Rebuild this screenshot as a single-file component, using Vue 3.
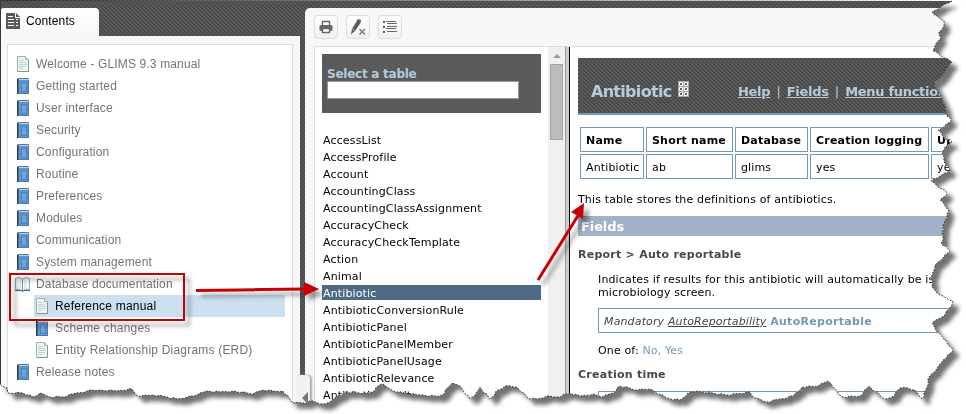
<script setup>
const chapters = [
  { label: 'Welcome - GLIMS 9.3 manual', icon: 'page' },
  { label: 'Getting started', icon: 'book' },
  { label: 'User interface', icon: 'book' },
  { label: 'Security', icon: 'book' },
  { label: 'Configuration', icon: 'book' },
  { label: 'Routine', icon: 'book' },
  { label: 'Preferences', icon: 'book' },
  { label: 'Modules', icon: 'book' },
  { label: 'Communication', icon: 'book' },
  { label: 'System management', icon: 'book' },
  { label: 'Database documentation', icon: 'open' },
  { label: 'Reference manual', icon: 'page', child: true, active: true },
  { label: 'Scheme changes', icon: 'book', child: true },
  { label: 'Entity Relationship Diagrams (ERD)', icon: 'page', child: true },
  { label: 'Release notes', icon: 'book' },
]
const tables = [
  'AccessList', 'AccessProfile', 'Account', 'AccountingClass', 'AccountingClassAssignment',
  'AccuracyCheck', 'AccuracyCheckTemplate', 'Action', 'Animal', 'Antibiotic',
  'AntibioticConversionRule', 'AntibioticPanel', 'AntibioticPanelMember',
  'AntibioticPanelUsage', 'AntibioticRelevance', 'AntibioticResult',
]

// Torn-paper outline, clockwise from the top right corner.
const edge = [
  [952, 1], [942, 6], [932, 12], [937, 16], [944, 21], [944, 26], [939, 32], [941, 38], [935, 46], [933, 51],
  [941, 56], [952, 62], [946, 70], [941, 77], [934, 82], [937, 89], [940, 95], [944, 104], [946, 113], [951, 121],
  [944, 127], [938, 130], [943, 137], [952, 142], [945, 147], [942, 153], [944, 161], [950, 171], [940, 176], [931, 181],
  [937, 186], [945, 190], [947, 194], [940, 200], [949, 211], [945, 220], [942, 232], [943, 240], [941, 243],
  [950, 251], [943, 258], [935, 265], [932, 275], [932, 287], [940, 295], [953, 301], [949, 309], [942, 317],
  [932, 323], [937, 332], [947, 342], [953, 351], [943, 360], [937, 368], [929, 377], [927, 387], [922, 399],
  [915, 390], [908, 388], [900, 388], [892, 397], [885, 399], [880, 395], [869, 386], [860, 396], [843, 397],
  [833, 387], [828, 381], [818, 386], [802, 387], [793, 396], [780, 399], [767, 402], [755, 398], [750, 392],
  [727, 395], [697, 391], [688, 393], [680, 400], [667, 398], [650, 389], [638, 390], [620, 386], [613, 393],
  [602, 397], [593, 394], [580, 396], [570, 393], [557, 397], [547, 396], [537, 399], [528, 398], [517, 387],
  [505, 386], [498, 390], [490, 399], [480, 387], [475, 395], [469, 398], [460, 386], [452, 383], [442, 395],
  [435, 396], [420, 395], [410, 394], [397, 392], [387, 387], [381, 384], [372, 392], [365, 393], [347, 392],
  [338, 396], [330, 402], [323, 404], [313, 401], [303, 403], [293, 403], [283, 391], [273, 391], [263, 390],
  [253, 394], [233, 391], [220, 392], [207, 391], [197, 395], [187, 397], [177, 399], [167, 397], [153, 395],
  [138, 396], [132, 389], [117, 391], [100, 390], [87, 391], [73, 394], [63, 397], [50, 397], [40, 393],
  [33, 397], [23, 393], [8, 393], [7, 388], [0, 384],
]
const torn = []
edge.forEach((p, i) => {
  torn.push(p)
  const q = edge[i + 1]
  if (!q) return
  const len = Math.hypot(q[0] - p[0], q[1] - p[1])
  const n = Math.floor(len / 3)
  for (let k = 1; k < n; k++) {
    const t = k / n
    const j = ((i * 7 + k * 5) % 4) * 0.5 - 0.75
    torn.push([
      +(p[0] + (q[0] - p[0]) * t + (-(q[1] - p[1]) / len) * j).toFixed(1),
      +(p[1] + (q[1] - p[1]) * t + ((q[0] - p[0]) / len) * j).toFixed(1),
    ])
  }
})
const outline = torn.map((p) => p.join(',')).join(' ')
const clip = 'polygon(0px 0px, ' + torn.map((p) => p[0] + 'px ' + p[1] + 'px').join(', ') + ')'
</script>

<template>
  <div class="scene">
    <div class="paper">
      <div class="app" :style="{ clipPath: clip }">
        <aside class="side">
          <div class="tab">
            <svg width="14" height="16" viewBox="0 0 14 16">
              <path d="M0 0H9V3H13L14 5V16H0Z" fill="#5b5b5b" />
              <path d="M10 0L14 4H10Z" fill="#5b5b5b" />
              <path d="M9.500 0V4.500H14" fill="none" stroke="#fff" />
              <path d="M2 3.500H7M2 6.500H8M2 9.500H8M2 12.500H8M10 6.500H12M10 9.500H12M10 12.500H12" stroke="#fff" />
            </svg>
            <span>Contents</span>
          </div>
          <div class="side-body">
            <nav class="tree">
              <div v-for="c in chapters" :key="c.label" class="node" :class="{ child: c.child, active: c.active }">
                <svg v-if="c.icon === 'page'" class="ico" width="12" height="16" viewBox="0 0 12 16">
                  <path d="M.5 .5H8.5L11.5 3.5V15.5H.5Z" fill="#eef4f2" stroke="#a3b3af" />
                  <path d="M8.5 .5V3.5H11.5" fill="#d5e3df" stroke="#a3b3af" />
                  <path d="M11.500 4V15.500H1" fill="none" stroke="#84968f" />
                  <path d="M2 4.5H7M2 6.5H9M2 8.5H10M2 10.5H9M2 12.5H6" stroke="#bfd3cf" />
                </svg>
                <svg v-else-if="c.icon === 'book'" class="ico" width="12" height="16" viewBox="0 0 12 16">
                  <path d="M0 1L1 0H12V16H0Z" fill="#5f96d0" />
                  <path d="M0 1H1.500V16H0Z" fill="#353b42" />
                  <path d="M1 .5H12" stroke="#5c7a98" />
                  <path d="M2 1.5H12" stroke="#b4cfe9" />
                  <path d="M11.5 2V16M2 15.5H12" stroke="#4a79b0" />
                  <path d="M4.5 4.5H9.5V13.5H4.5Z" fill="#6ca4db" stroke="#4a80bd" />
                </svg>
                <svg v-else class="ico open" width="16" height="16" viewBox="0 0 16 16">
                  <path d="M.5 2.5Q4 0 7.5 3Q11 0 14.5 2.5V13.5Q11 12 7.5 15Q4 12 .5 13.5Z" fill="#f2f6f7" stroke="#9aa8af" />
                  <path d="M7.5 3V15" stroke="#7e939e" />
                  <path d="M5.5 3V12M10 3V12" stroke="#d3dfe3" />
                  <path d="M0 14.5H6L7.5 15.5L9 14.5H15" fill="none" stroke="#44657b" />
                </svg>
                <span>{{ c.label }}</span>
              </div>
            </nav>
          </div>
          <div class="collapse">
            <svg width="6" height="12" viewBox="0 0 6 12"><path d="M6 0V12L0 6Z" fill="#777" /></svg>
          </div>
        </aside>

        <main class="main">
          <div class="toolbar">
            <button class="tool">
              <svg width="14" height="14" viewBox="0 0 14 14">
                <path d="M3.5 5V1.5H10.5V5" fill="none" stroke="#666" stroke-width="1.4" />
                <rect x=".5" y="5" width="13" height="6" rx="1.5" fill="#666" />
                <path d="M3.5 8.5H10.5V12.5H3.5Z" fill="#fff" stroke="#666" stroke-width="1.3" />
              </svg>
            </button>
            <button class="tool">
              <svg width="16" height="16" viewBox="0 0 16 16">
                <path d="M8 0L11 1L10.500 4L5 12L1 15.500L2 10Z" fill="#5b5b5b" />
                <path d="M2.500 10L4.500 11.500" stroke="#fff" stroke-width=".7" />
                <path d="M9.500 10L15 15.500M15 10L9.500 15.500" stroke="#777" stroke-width="1.400" />
              </svg>
            </button>
            <button class="tool">
              <svg width="14" height="14" viewBox="0 0 14 14">
                <path d="M0 2H2M0 7H2M0 12H2" stroke="#5b5b5b" stroke-width="2" />
                <path d="M3 1.500H13M4 3.500H14M4 6.500H14M3 8.500H13M4 11.500H14" stroke="#6a6a6a" stroke-width="1" />
              </svg>
            </button>
          </div>
          <div class="frames">
            <section class="index">
              <div class="index-body">
                <div class="search">
                  <label for="q">Select a table</label>
                  <input id="q" type="text" />
                </div>
                <ul class="tables">
                  <li v-for="t in tables" :key="t" :class="{ current: t === 'Antibiotic' }">{{ t }}</li>
                </ul>
              </div>
              <div class="scroll">
                <svg width="8" height="4" viewBox="0 0 8 4"><path d="M0 4L4 0L8 4Z" fill="#999" /></svg>
                <div class="thumb"></div>
              </div>
            </section>
            <div class="splitter"></div>
            <article class="doc">
              <header class="doc-head">
                <h1>Antibiotic</h1>
                <svg class="grid" width="11" height="16" viewBox="0 0 11 16">
                  <path d="M0 0H11V16H0Z" fill="#aaa" />
                  <path d="M1.500 1.500H4.500V4.500H1.500ZM6.500 1.500H9.500V4.500H6.500ZM1.500 6.500H4.500V9.500H1.500ZM6.500 6.500H9.500V9.500H6.500ZM1.500 11.500H4.500V14.500H1.500ZM6.500 11.500H9.500V14.500H6.500Z" fill="#666" stroke="#fff" />
                </svg>
                <div class="links"><u>Help</u><span>|</span><u>Fields</u><span>|</span><u>Menu functions</u></div>
              </header>
              <div class="facts">
                <b>Name</b><b>Short name</b><b>Database</b><b>Creation logging</b><b>Update logging</b>
                <span>Antibiotic</span><span>ab</span><span>glims</span><span>yes</span><span>yes</span>
              </div>
              <p class="intro">This table stores the definitions of antibiotics.</p>
              <h2>Fields</h2>
              <h3>Report &gt; Auto reportable</h3>
              <p class="desc">Indicates if results for this antibiotic will automatically be issued<br />microbiology screen.</p>
              <div class="sig"><i>Mandatory <u>AutoReportability</u></i> <b>AutoReportable</b></div>
              <p class="oneof">One of: <span>No, Yes</span></p>
              <h3 class="second">Creation time</h3>
              <div class="sig next"></div>
            </article>
          </div>
        </main>
      </div>
    </div>

    <svg class="marks" width="966" height="414" viewBox="0 0 966 414">
      <polyline :points="outline" fill="none" stroke="#222" stroke-width=".9" stroke-dasharray="1.5 1.7" />
      <g class="red">
        <rect x="10" y="274" width="174" height="46" fill="none" stroke="#c60005" stroke-width="2" />
        <path d="M196 290.500L305 289" stroke="#c60005" stroke-width="3" />
        <path d="M304 282L319 289L304 296Z" fill="#c60005" />
        <path d="M538 280L579 214" stroke="#c60005" stroke-width="3" />
        <path d="M584 203L583 219L571 212Z" fill="#c60005" />
      </g>
    </svg>
  </div>
</template>

<style>
body { background: #fff; overflow: hidden; }
</style>

<style scoped>
* { box-sizing: border-box; }
.scene { position: relative; width: 966px; height: 414px; overflow: hidden; background: #fff; font-family: Verdana, "DejaVu Sans", sans-serif; font-size: 11px; letter-spacing: .14px; color: #000; }
.paper { filter: drop-shadow(6px 6px 2px rgba(0, 0, 0, .55)); }
.app, .doc-head {
  background: linear-gradient(45deg, #484848 25%, #5c5c5c 25% 50%, #484848 50% 75%, #5c5c5c 75%) 0 0 / 4px 4px;
}
.app { display: flex; height: 414px; width: 966px; padding-top: 7px; border-top: 1px solid #383838; border-left: 1px solid #383838; }
.side { position: relative; width: 299px; flex: none; display: flex; flex-direction: column; font-family: Arial, "Liberation Sans", sans-serif; }
.tab { width: 98px; height: 28px; display: flex; align-items: center; gap: 6px; padding: 0 0 2px 5px; border-radius: 2px 4px 0 0; background: linear-gradient(#fff, #f7f7f7); font-size: 12px; letter-spacing: .12px; }
.side-body { flex: 1; background: #f7f7f7; padding: 8px 7px 0 6px; display: flex; }
.tree { flex: 1; background: #fff; border: 1px solid #ddd; padding: 8px 7px 0 9px; }
.node { height: 22px; display: flex; align-items: center; gap: 7px; font-size: 12px; line-height: 14px; color: #747474; white-space: nowrap; letter-spacing: .15px; }
.node span { padding-bottom: 1px; }
.node .open { margin: 0 -2px; }
.node.child { margin-left: 17px; padding-left: 2px; letter-spacing: .2px; }
.node.active { background: #cbdfef; color: #000; }
.collapse { position: absolute; left: 296px; top: 367px; width: 14px; height: 45px; padding: 17px 0 0 5px; background: #f1f1f1; border-radius: 0 4px 0 0; border-right: 1px solid #aaa; box-shadow: 1px 0 2px #aaa; z-index: 2; }
.collapse svg { display: block; }
.main { flex: 1; margin-left: 5px; background: #f7f7f7; border-radius: 5px 0 0 0; display: flex; flex-direction: column; min-width: 0; }
.toolbar { height: 38px; padding: 7px 0 0 9px; display: flex; gap: 8px; }
.tool { width: 24px; height: 24px; padding: 0; border: 1px solid #ddd; border-radius: 4px; background: linear-gradient(#fff, #f0f0f0); display: flex; align-items: center; justify-content: center; }
.frames { flex: 1; margin-left: 9px; border: solid #ddd; border-width: 1px 0 0 1px; background: #fff; display: flex; min-height: 0; }
.index { width: 250px; flex: none; display: flex; }
.index-body { width: 233px; padding: 7px 7px 0; }
.search { height: 59px; background: #5a5a5a; padding: 14px 5px 0; display: flex; flex-direction: column; color: #b5cbdc; font-weight: bold; font-size: 12px; line-height: 13px; letter-spacing: -.25px; }
.search input { width: 192px; height: 18px; border: 1px solid #999; background: #fff; padding: 0; outline: none; }
.tables { list-style: none; margin: 19px 0 0; padding: 0; display: flex; flex-direction: column; gap: 2px; }
.tables li { height: 15px; line-height: 17px; padding-left: 1px; }
.tables .current { background: #4f6a85; color: #fff; }
.scroll { width: 17px; background: #f0f0f0; padding: 7px 2px 0; display: flex; flex-direction: column; align-items: center; gap: 6px; }
.scroll svg { flex: none; }
.thumb { width: 13px; height: 76px; background: #bcbcbc; border: 1px solid #a3a3a3; }
.splitter { width: 5px; flex: none; background: #ccc; border-left: 1px solid #999; border-right: 1px solid #000; }
.doc { flex: 1; min-width: 0; padding: 11px 0 0 8px; white-space: nowrap; }
.doc-head { height: 57px; border-bottom: 2px solid #7399b7; display: flex; align-items: center; padding: 11px 0 0 13px; color: #b3cbdd; }
h1 { margin: 0; width: 87px; font-size: 16px; letter-spacing: -.7px; }
.grid { margin: -4px 49px 0 0; flex: none; }
.links { display: flex; font-size: 13px; font-weight: bold; letter-spacing: -.3px; }
.links span { width: 16.500px; text-align: center; font-weight: normal; }
.facts { display: grid; grid-template-columns: 64px 87px 73px 119px 119px; grid-auto-rows: 25px; gap: 2px; margin: 12px 0 0 2px; }
.facts > * { border: 1px solid #7399b7; padding-left: 5px; line-height: 25px; }
.facts b { letter-spacing: .2px; }
.intro { margin: 14px 0 0; line-height: 14px; }
h2 { margin: 9px 0 0; height: 20px; background: #a1b1c7; color: #fff; font-size: 13px; line-height: 21px; padding-left: 3px; letter-spacing: -.1px; }
h3 { margin: 12px 0 0; font-size: 11px; line-height: 14px; color: #484848; letter-spacing: .25px; }
.desc { margin: 11px 0 0 20px; line-height: 13px; }
.sig { margin: 9px 0 0 20px; height: 25px; border: 1px solid #7399b7; padding-left: 5px; line-height: 25px; color: #444; }
.sig b, .oneof span { color: #7399b7; }
.sig b { letter-spacing: .3px; }
.oneof { margin: 11px 0 0 20px; line-height: 14px; }
.second { margin-top: 10px; }
.sig.next { margin-top: 9px; }
.marks { position: absolute; left: 0; top: 0; }
.red { filter: drop-shadow(5px 5px 2px rgba(0, 0, 0, .38)); }
</style>
